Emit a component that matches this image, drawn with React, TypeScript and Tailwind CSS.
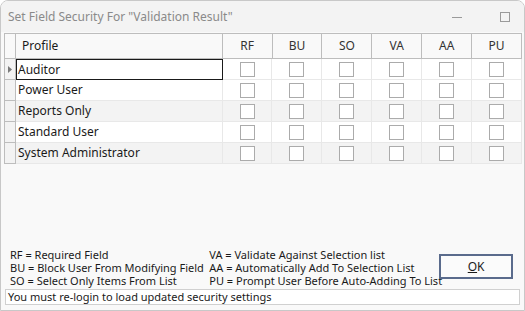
import React from 'react';

const cols = ['RF', 'BU', 'SO', 'VA', 'AA', 'PU'];
const profiles = ['Auditor', 'Power User', 'Reports Only', 'Standard User', 'System Administrator'];

export default function App() {
  return (
    <div
      className="w-[525px] h-[311px] bg-[#f9f9f9] text-[12px] text-[#1a1a1a] flex flex-col overflow-hidden border border-[#c8c8c8] rounded-t-[8px]"
      style={{ fontFamily: '"Noto Sans", "Open Sans", sans-serif' }}
    >
      {/* title bar */}
      <div className="h-[31px] shrink-0 flex items-center justify-between bg-[#f3f3f3] pl-[7px] pr-[14px]">
        <span className="text-[12px] text-[#8a8a8a]">Set Field Security For "Validation Result"</span>
        <div className="flex items-center gap-[38px] text-[#9a9a9a]">
          <div className="w-[10px] h-px bg-[#9a9a9a] mt-[1px]" />
          <div className="w-[10px] h-[10px] border border-[#9a9a9a]" />
        </div>
      </div>

      {/* grid */}
      <div className="ml-[3px] mt-[1px] w-[518px] border-l border-t border-[#bdbdbd]">
        <div className="flex h-[25px] bg-[#f9f9f9] border-b border-[#bdbdbd]">
          <div className="w-[11px] border-r border-[#bdbdbd]" />
          <div className="w-[207px] border-r border-[#bdbdbd] flex items-center pl-[6px]">Profile</div>
          {cols.map((c) => (
            <div key={c} className="w-[50px] border-r border-[#bdbdbd] flex items-center justify-center text-[#333]">
              {c}
            </div>
          ))}
        </div>
        {profiles.map((p, i) => (
          <div key={p} className={`flex h-[21px] ${i % 2 === 0 && i > 0 ? 'bg-[#f3f3f3]' : 'bg-white'}`}>
            <div className="w-[11px] bg-[#f3f3f3] border-r border-b border-[#bdbdbd] flex items-center justify-center">
              {i === 0 && (
                <svg width="4" height="7" viewBox="0 0 4 7">
                  <path d="M0 0 L4 3.5 L0 7 Z" fill="#7a7a7a" />
                </svg>
              )}
            </div>
            <div
              className={`w-[207px] flex items-center pl-[1px] ${
                i === 0 ? 'border border-[#1a1a1a] bg-white' : 'border-r border-b border-[#e8e8e8] pl-[2px]'
              }`}
            >
              {p}
            </div>
            {cols.map((c) => (
              <div key={c} className="w-[50px] border-r border-b border-[#e8e8e8] flex items-center justify-center">
                <div className="w-[15px] h-[15px] border border-[#ababab] bg-white" />
              </div>
            ))}
          </div>
        ))}
      </div>

      <div className="flex-1" />

      {/* legend + OK */}
      <div className="flex items-start pl-[9px] pr-[11px] text-[11px] leading-[13px] text-[#1a1a1a]">
        <div className="w-[200px]">
          <div>RF = Required Field</div>
          <div>BU = Block User From Modifying Field</div>
          <div>SO = Select Only Items From List</div>
        </div>
        <div className="w-[230px] whitespace-nowrap">
          <div>VA = Validate Against Selection list</div>
          <div>AA = Automatically Add To Selection List</div>
          <div>PU = Prompt User Before Auto-Adding To List</div>
        </div>
        <button className="mt-[6px] w-[74px] h-[25px] border-2 border-[#5a6b8c] bg-[#fbfbfb] flex items-center justify-center text-[12px]">
          <span><span className="underline">O</span>K</span>
        </button>
      </div>

      {/* status */}
      <div className="mx-[4px] mt-[2px] mb-[5px] h-[16px] border border-[#d0d0d0] bg-white flex items-center pl-[2px] text-[11px]">
        You must re-login to load updated security settings
      </div>
    </div>
  );
}
